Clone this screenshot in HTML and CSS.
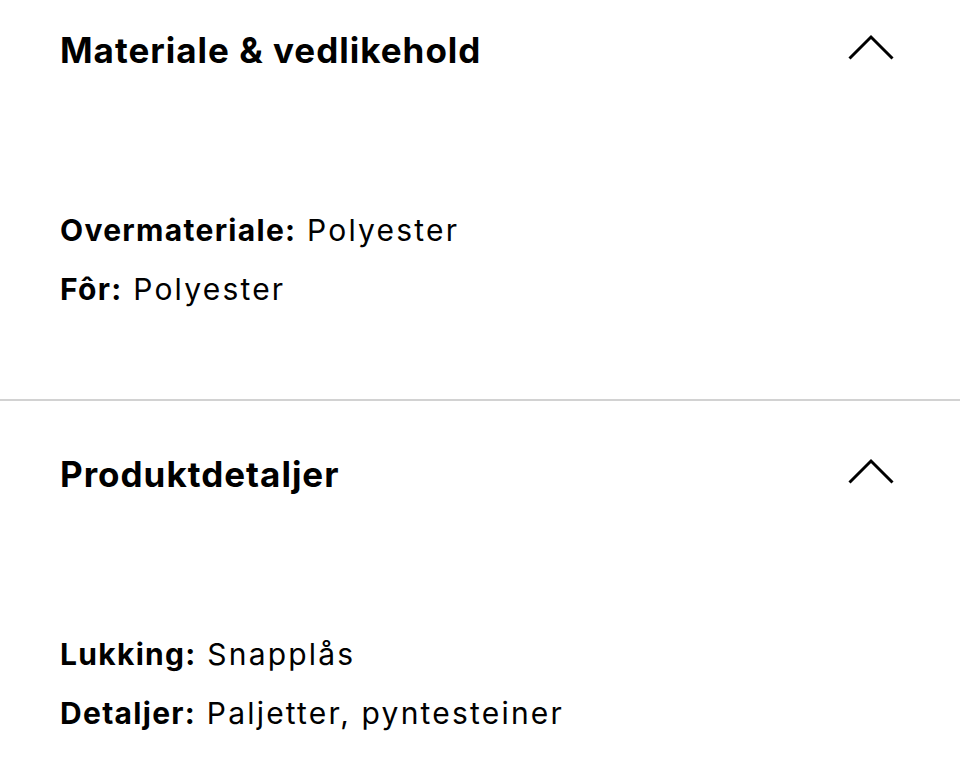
FILE: index.html
```html
<!DOCTYPE html>
<html lang="no">
<head>
<meta charset="utf-8">
<title>Produktinformasjon</title>
<link rel="stylesheet" href="styles.css">
</head>
<body>
<div class="accordion">
  <section class="panel">
    <div class="panel-header">
      <h2 class="panel-title">Materiale &amp; vedlikehold</h2>
      <svg class="chevron" width="48" height="27" viewBox="0 0 48 27" aria-hidden="true"><polyline points="2.5,24.5 24,3 45.5,24.5" fill="none" stroke="#000" stroke-width="3"/></svg>
    </div>
    <div class="panel-body">
      <p class="attr"><b>Overmateriale:</b> Polyester</p>
      <p class="attr"><b>Fôr:</b> Polyester</p>
    </div>
  </section>
  <section class="panel">
    <div class="panel-header">
      <h2 class="panel-title">Produktdetaljer</h2>
      <svg class="chevron" width="48" height="27" viewBox="0 0 48 27" aria-hidden="true"><polyline points="2.5,24.5 24,3 45.5,24.5" fill="none" stroke="#000" stroke-width="3"/></svg>
    </div>
    <div class="panel-body">
      <p class="attr"><b>Lukking:</b> Snapplås</p>
      <p class="attr"><b>Detaljer:</b> Paljetter, pyntesteiner</p>
    </div>
  </section>
</div>
</body>
</html>
```
FILE: styles.css
```css
html, body {
  margin: 0;
  padding: 0;
  background: #fff;
}
body {
  font-family: Inter, "Liberation Sans", Arial, sans-serif;
  color: #000;
  overflow: hidden;
}
.accordion {
  margin-top: -23px;
}
.panel {
  padding: 0 65px 80px 60px;
  border-bottom: 2px solid #d2d2d2;
}
.panel-header {
  display: flex;
  align-items: center;
  justify-content: space-between;
  padding-top: 53px;
}
.panel-title {
  margin: 0;
  font-size: 35px;
  line-height: 40px;
  font-weight: 700;
  letter-spacing: 1px;
}
.chevron {
  display: block;
  margin-top: -6px;
}
.panel-body {
  padding-top: 131px;
}
.attr {
  margin: 0;
  font-size: 30px;
  line-height: 59px;
  font-weight: 400;
  letter-spacing: 2.2px;
}
.attr b {
  font-weight: 700;
  letter-spacing: 1.3px;
}
```
